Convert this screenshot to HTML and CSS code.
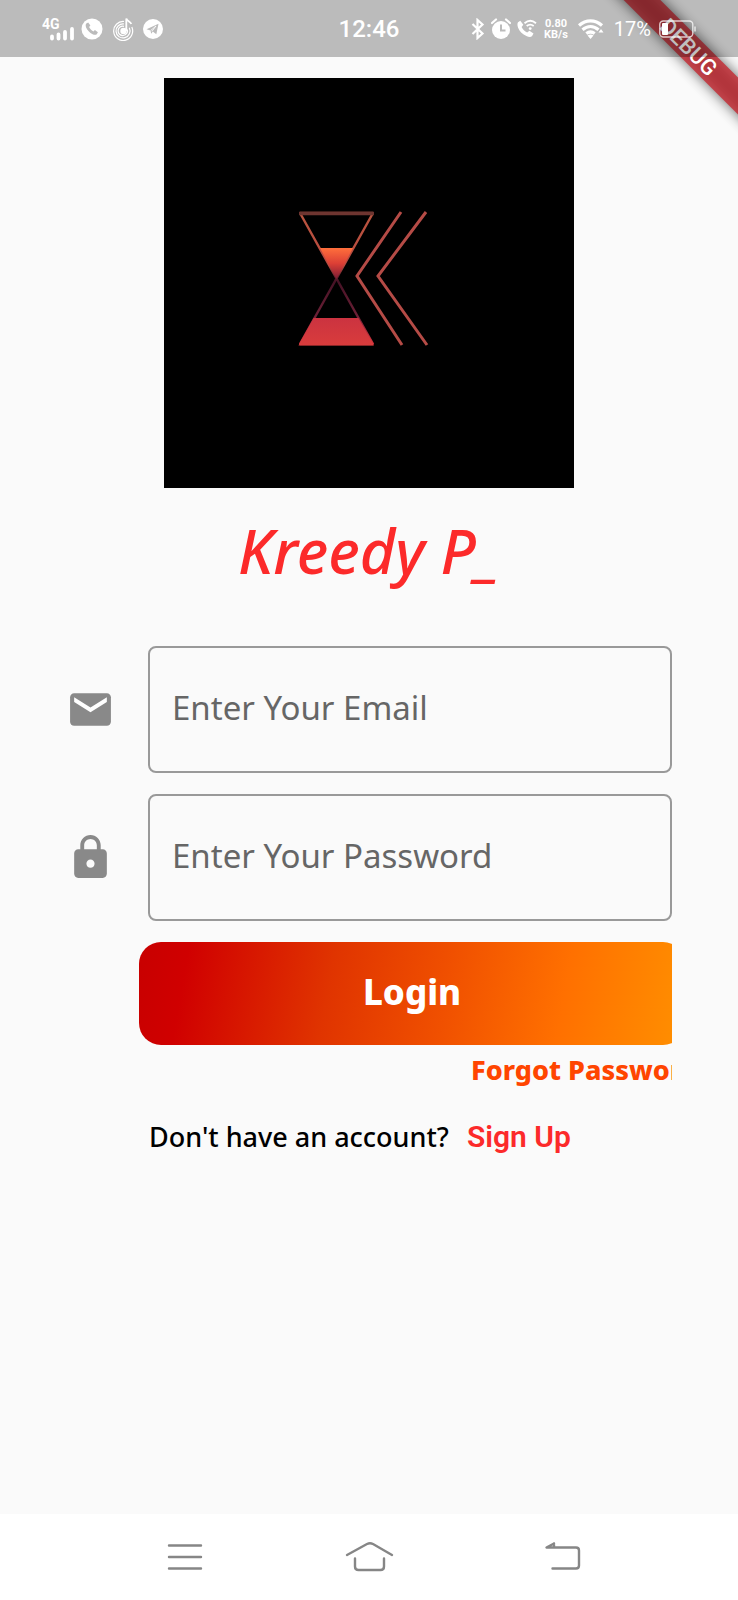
FILE: index.html
```html
<!DOCTYPE html>
<html lang="en">
<head>
<meta charset="utf-8">
<meta name="viewport" content="width=device-width, initial-scale=1">
<title>Kreedy</title>
<link rel="stylesheet" href="styles.css">
</head>
<body>
<div class="screen">
  <svg class="banner" width="180" height="180" viewBox="-20 0 180 180" aria-hidden="true">
    <defs>
      <filter id="soft" x="-30%" y="-150%" width="160%" height="400%"><feGaussianBlur stdDeviation="7"/></filter>
    </defs>
    <g transform="translate(110 49) rotate(45)">
      <rect x="-160" y="-13" width="320" height="26" fill="#000" opacity=".6" filter="url(#soft)"/>
      <rect x="-160" y="-13" width="320" height="26" fill="#c62831" opacity=".8"/>
      <text x="-3" y="8" text-anchor="middle" class="banner-text">DEBUG</text>
    </g>
  </svg>

  <header class="status">
    <div class="status-group">
      <svg width="33" height="24" viewBox="0 0 33 24">
        <text x="0" y="12" class="net-text">4G</text>
        <path d="M10 19.500v2M16.500 17.500v4M23 15v6.500M30 12v9.500" stroke="#fff" stroke-width="3.800" stroke-linecap="round"/>
      </svg>
      <svg class="gap-s" width="22" height="22" viewBox="0 0 22 22">
        <circle cx="11" cy="11" r="10.500" fill="#fff"/>
        <path d="M5.300 5.600l1.900-1.100 2.200 3-1.300 1.600c.9 1.900 2.200 3.200 4.300 4.300l1.500-1.300 3 2.100-1.100 2c-1 .9-2.500.8-4.200 0-3-1.400-5.300-3.700-6.500-6.600-.5-1.600-.6-3 .2-4z" fill="#bbb"/>
      </svg>
      <svg class="gap-m" width="22" height="24" viewBox="0 0 22 24" fill="none" stroke="#fff">
        <g stroke-width="1.200">
          <path d="M12 4.500A9.500 9.500 0 1 0 19.800 10"/>
          <path d="M12 7A7 7 0 1 0 17.300 10.800"/>
          <path d="M12 9.300A4.700 4.700 0 1 0 15.300 12.500"/>
        </g>
        <circle cx="11.500" cy="14" r="3.200" fill="#fff" stroke="none"/>
        <path d="M14.300 14V1.500c1 3 4 3 5 5.500" stroke-width="1.800"/>
      </svg>
      <svg class="gap-m" width="20" height="20" viewBox="0 0 20 20">
        <circle cx="10" cy="10" r="10" fill="#fff"/>
        <path d="M3.500 10.200L15.500 4.800 13.300 15.200 9.800 12.600 8.200 14.800 7.500 11.600z" fill="#bbb"/>
        <path d="M7.700 11.500L13 7l-4 5.300" fill="none" stroke="#fff" stroke-width=".8"/>
      </svg>
    </div>
    <time class="clock">12:46</time>
    <div class="status-group status-right">
      <svg width="14" height="22" viewBox="0 0 14 22"><path d="M1.500 6l10 9.500-5 4.500V2l5 4.500-10 9.500" fill="none" stroke="#fff" stroke-width="2.200"/></svg>
      <svg class="gap-s" width="20" height="22" viewBox="0 0 20 22">
        <circle cx="10" cy="12" r="9" fill="#fff"/>
        <path d="M1 5l4-3.500M19 5l-4-3.500" stroke="#fff" stroke-width="2.200" stroke-linecap="round"/>
        <path d="M10 6.500v6h4.500" fill="none" stroke="#bbb" stroke-width="2"/>
      </svg>
      <svg class="gap-s" width="20" height="20" viewBox="0 0 20 20" fill="none" stroke="#fff">
        <path d="M1 3.200l2.300-1.500 3 4-1.700 2.200c1.300 2.700 3 4.300 5.600 5.500l2.200-1.700 4.100 2.800-1.400 2.600c-1.300 1.300-3.500 1-5.700 0C5.500 15.300 2.700 12.500 1.100 8.700.3 6.400.2 4.500 1 3.200z" fill="#fff" stroke="none"/>
        <path d="M7.500 4.200c3.500-3 8-3 11.500 0M9.700 7c2.200-1.800 4.800-1.800 7 0" stroke-width="1.800"/>
        <circle cx="13.200" cy="9.600" r="1.400" fill="#fff" stroke="none"/>
      </svg>
      <span class="speed"><span>0.80</span><span>KB/s</span></span>
      <svg class="wifi" width="26" height="20" viewBox="0 0 26 20" fill="none" stroke="#fff" stroke-width="3.200">
        <path d="M1 6.500c7-6.200 16-6.200 23 0M4.500 10.800c5-4.300 11-4.300 16 0M8.300 14.500c2.800-2 5.600-2 8.400 0"/>
        <path d="M9.500 16.500c2-1.500 4-1.500 6 0l-3 3.500z" fill="#fff" stroke="none"/>
        <path d="M23 10l2.500 3.500h-5z" fill="#fff" stroke="none"/>
      </svg>
      <span class="percent">17%</span>
      <svg class="battery" width="37" height="18" viewBox="0 0 37 18">
        <rect x=".8" y="1" width="33" height="16" rx="3.500" fill="none" stroke="#fff" stroke-width="1.400" opacity=".75"/>
        <rect x="3" y="3" width="6" height="12" rx="1" fill="#fff"/>
        <path d="M36 6.500v5" stroke="#fff" stroke-width="1.500" opacity=".75"/>
      </svg>
    </div>
  </header>

  <main class="content">
    <svg class="logo" viewBox="0 0 410 410" role="img" aria-label="Kreedy logo">
      <defs>
        <linearGradient id="sand" x1="0" y1="0" x2="0" y2="1"><stop offset="0" stop-color="#ff6f3c"/><stop offset=".5" stop-color="#dc3f35"/><stop offset="1" stop-color="#7d1b35"/></linearGradient>
        <linearGradient id="base" x1="0" y1="0" x2="0" y2="1"><stop offset="0" stop-color="#cb3340"/><stop offset="1" stop-color="#d93c3c"/></linearGradient>
        <linearGradient id="glass" x1="0" y1="0" x2="0" y2="1"><stop offset="0" stop-color="#b9543f"/><stop offset=".4" stop-color="#b94a3f"/><stop offset=".52" stop-color="#451225"/><stop offset=".78" stop-color="#6b2036"/><stop offset="1" stop-color="#d5333d"/></linearGradient>
      </defs>
      <rect width="410" height="410" fill="#000"/>
      <path d="M136 135h73L136 266h73z" fill="none" stroke="url(#glass)" stroke-width="2.400" stroke-linejoin="bevel"/>
      <path d="M135 135.500h75" stroke="#6e3530" stroke-width="3.600"/>
      <path d="M156 170h33l-16.500 31z" fill="url(#sand)"/>
      <path d="M149.500 240h45l15.500 27.500H134.500z" fill="url(#base)"/>
      <path d="M237 134l-44 64 45 69M262 134l-48 64 49 69" fill="none" stroke="#b54b46" stroke-width="3"/>
    </svg>

    <h1 class="title">Kreedy P_</h1>

    <form class="form" onsubmit="return false">
      <div class="field">
        <label for="email" aria-label="Email">
          <svg class="field-icon" viewBox="0 0 24 24"><path d="M20 4H4c-1.100 0-2 .9-2 2v12c0 1.100.9 2 2 2h16c1.100 0 2-.9 2-2V6c0-1.100-.9-2-2-2z" fill="#898989"/><path d="M20 8.300l-8 5-8-5V6l8 5 8-5z" fill="#fff"/></svg>
        </label>
        <input class="input" id="email" type="email" placeholder="Enter Your Email">
      </div>
      <div class="field">
        <label for="password" aria-label="Password">
          <svg class="field-icon" viewBox="0 0 24 24"><path d="M18 8h-1V6c0-2.760-2.240-5-5-5S7 3.240 7 6v2H6c-1.100 0-2 .9-2 2v10c0 1.100.9 2 2 2h12c1.100 0 2-.9 2-2V10c0-1.100-.9-2-2-2zm-6 9c-1.100 0-2-.9-2-2s.9-2 2-2 2 .9 2 2-.9 2-2 2zm3.100-9H8.900V6c0-1.710 1.390-3.100 3.100-3.100s3.100 1.390 3.100 3.100v2z" fill="#898989"/></svg>
        </label>
        <input class="input" id="password" type="password" placeholder="Enter Your Password">
      </div>
      <div class="actions">
        <button class="login" type="submit">Login</button>
        <a class="forgot" href="#forgot">Forgot Password?</a>
      </div>
    </form>

    <p class="signup">Don't have an account? <a class="signup-link" href="#signup">Sign Up</a></p>
  </main>

  <nav class="navbar" aria-label="System">
    <button class="nav-button" type="button" aria-label="Recent apps">
      <svg width="64" height="40" viewBox="0 0 64 40"><path d="M16 8.500h32M16 20h32M16 31.500h32"/></svg>
    </button>
    <button class="nav-button" type="button" aria-label="Home">
      <svg width="64" height="40" viewBox="0 0 64 40"><path d="M10 18L30 7q3-1.500 6 0L55 18M18 21.500v8q0 3.500 3.500 3.500h22q3.500 0 3.500-3.500v-8"/></svg>
    </button>
    <button class="nav-button" type="button" aria-label="Back">
      <svg width="64" height="40" viewBox="0 0 64 40"><path d="M33 6.500L25.500 10.500H55q3 0 3 3V28.500q0 3-3 3H31.500M33 6.500v4"/></svg>
    </button>
  </nav>
</div>
</body>
</html>
```

FILE: styles.css
```css
* {
  box-sizing: border-box;
}

body {
  margin: 0;
  background: #fafafa;
  font-family: "Noto Sans", sans-serif;
}

svg {
  display: block;
  flex: none;
}

.screen {
  position: relative;
  display: flex;
  flex-direction: column;
  min-height: 100vh;
  overflow: hidden;
}

/* Corner ribbon, under the translucent status bar */
.banner {
  position: absolute;
  top: 0;
  right: -3px;
  z-index: 1;
}

.banner-text {
  font: 500 22px Roboto, sans-serif;
  fill: #fff;
}

.status {
  position: relative;
  z-index: 2;
  display: grid;
  grid-template-columns: 1fr auto 1fr;
  align-items: center;
  height: 57px;
  padding: 0 42px;
  background: rgba(0, 0, 0, 0.25);
  color: #fff;
  font-family: Roboto, sans-serif;
}

.status-group {
  display: flex;
  align-items: center;
}

.status-right {
  justify-content: flex-end;
}

.net-text {
  font: 700 14px Roboto, sans-serif;
  fill: #fff;
}

.gap-s {
  margin-left: 6px;
}

.gap-m {
  margin-left: 9px;
}

.clock {
  font-size: 24px;
  font-weight: 500;
}

.speed {
  display: flex;
  flex-direction: column;
  align-items: center;
  margin-left: 7px;
  font-size: 11px;
  line-height: 11px;
  font-weight: 700;
}

.wifi {
  margin-left: 10px;
}

.percent {
  margin-left: 10px;
  font-size: 20px;
}

.battery {
  margin-left: 8px;
}

.content {
  flex: 1;
  display: flex;
  flex-direction: column;
  padding: 21px 66px 40px;
}

.logo {
  align-self: center;
  width: 410px;
  max-width: 100%;
}

.title {
  margin: 22px 0 54px;
  font-size: 61px;
  line-height: 82px;
  font-weight: 500;
  font-style: italic;
  text-align: center;
  color: #fc2a2a;
}

.form {
  display: flex;
  flex-direction: column;
  gap: 21px;
}

.field {
  display: flex;
  align-items: center;
  gap: 33px;
}

.field-icon {
  width: 49px;
  height: 49px;
}

.input {
  flex: 1;
  min-width: 0;
  height: 127px;
  padding: 0 22px 4px;
  border: 2px solid #999;
  border-radius: 8px;
  background: transparent;
  font: 400 33px "Noto Sans", sans-serif;
  color: #222;
}

.input::placeholder {
  color: #666;
  opacity: 1;
}

.actions {
  display: flex;
  flex-direction: column;
  padding-left: 73px;
  overflow: hidden;
}

.login {
  width: calc(100% + 13px);
  height: 103px;
  padding: 0 0 4px;
  border: 0;
  border-radius: 22px;
  background: linear-gradient(100deg, #c80000 0%, #d00000 9%, #e03400 35%, #f05000 56%, #ff7000 77%, #ff9000 100%);
  font: 800 35px "Noto Sans", sans-serif;
  color: #fff;
}

.forgot {
  align-self: flex-end;
  margin-right: -40px;
  padding-top: 6px;
  font-size: 27px;
  line-height: 37px;
  font-weight: 800;
  white-space: nowrap;
  text-decoration: none;
  color: #ff4500;
}

.signup {
  display: flex;
  align-items: baseline;
  gap: 18px;
  margin: 30px 0 0 83px;
  font-size: 27px;
  line-height: 37px;
  font-weight: 500;
  color: #000;
}

.signup-link {
  font-family: Roboto, sans-serif;
  font-size: 30px;
  font-weight: 600;
  text-decoration: none;
  color: #fc2a2a;
}

.navbar {
  display: flex;
  justify-content: space-between;
  align-items: center;
  height: 86px;
  padding: 0 153px;
  background: #fff;
}

.nav-button {
  padding: 0;
  border: 0;
  background: none;
}

.nav-button path {
  fill: none;
  stroke: #868686;
  stroke-width: 2.4;
  stroke-linecap: round;
  stroke-linejoin: round;
}
```
